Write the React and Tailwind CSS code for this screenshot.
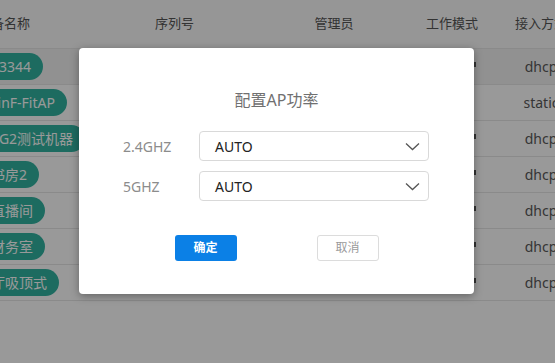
const rows = [
  { name: 'AP-3344', access: 'dhcp', mark: true, active: true },
  { name: 'MainF-FitAP', access: 'static', mark: false },
  { name: 'AP-G2测试机器', access: 'dhcp', mark: true },
  { name: '大书房2', access: 'dhcp', mark: true },
  { name: '大直播间', access: 'dhcp', mark: true },
  { name: '大财务室', access: 'dhcp', mark: true },
  { name: '大厅吸顶式', access: 'dhcp', mark: true },
];

const bands = [
  { id: '2.4', label: '2.4GHZ' },
  { id: '5', label: '5GHZ' },
];

function Chevron() {
  return (
    <svg width="15" height="9" viewBox="0 0 15 9" fill="none">
      <polyline points="1,1.5 7.5,7.5 14,1.5" stroke="#555" strokeWidth="1.3" />
    </svg>
  );
}

function DeviceTable() {
  return (
    <div className="ml-[-60px] w-[642px] text-[13px] text-[#595959]">
      {/* header */}
      <div className="flex h-[49px] items-center border-b border-[#e6e6e6] bg-[#fafafa] text-[#555]">
        <div className="w-[145px] shrink-0 pl-[38px]">设备名称</div>
        <div className="w-[179px] shrink-0 text-center">序列号</div>
        <div className="w-[140px] shrink-0 text-center">管理员</div>
        <div className="w-[96px] shrink-0 whitespace-nowrap text-center">工作模式</div>
        <div className="w-[82px] shrink-0 whitespace-nowrap text-center">接入方式</div>
      </div>

      {rows.map((r) => (
        <div
          key={r.name}
          className={`flex h-[36px] items-center border-b border-[#e6e6e6] ${r.active ? 'bg-[#f2f2f2]' : 'bg-white'}`}
        >
          <div className="w-[145px] shrink-0 pl-[25px]">
            <span className="inline-flex h-[27px] items-center whitespace-nowrap rounded-full bg-[#31b3a1] px-3 text-[14px] text-white">
              {r.name}
            </span>
          </div>
          <div className="w-[179px] shrink-0" />
          <div className="w-[140px] shrink-0" />
          <div className="flex w-[96px] shrink-0 justify-end pr-[24px]">
            {r.mark && <span className="mb-[4px] h-[5px] w-[2px] bg-[#555]" />}
          </div>
          <div className="w-[82px] shrink-0 text-center text-[14px]">{r.access}</div>
        </div>
      ))}
    </div>
  );
}

function PowerDialog() {
  return (
    <div className="absolute left-[79px] top-[48px] flex h-[246px] w-[395px] flex-col items-center rounded-[4px] bg-white pt-[40px] shadow-[0_2px_8px_rgba(0,0,0,0.35)]">
      <h2 className="text-[16px] leading-[24px] text-[#707070]">配置AP功率</h2>

      <div className="mt-[19px] flex w-full flex-col gap-[10px] pl-[44px] pr-[45px]">
        {bands.map((b) => (
          <div key={b.id} className="flex items-center">
            <span className="w-[76px] shrink-0 text-[14px] text-[#8c8c8c]">{b.label}</span>
            <div className="flex h-[30px] flex-1 items-center justify-between rounded-[4px] border border-[#d9d9d9] pl-[15px] pr-[8px] text-[14px] text-[#222]">
              <span>AUTO</span>
              <Chevron />
            </div>
          </div>
        ))}
      </div>

      <div className="mt-[34px] flex gap-[80px] text-[12px]">
        <button className="h-[26px] w-[62px] rounded-[3px] bg-[#0b80e6] font-bold text-white">确定</button>
        <button className="h-[26px] w-[62px] rounded-[3px] border border-[#dcdcdc] bg-white text-[#9a9a9a]">取消</button>
      </div>
    </div>
  );
}

export default function App() {
  return (
    <div
      className="relative h-[363px] w-[555px] overflow-hidden bg-white"
      style={{ fontFamily: '"Noto Sans", "Noto Sans CJK SC", sans-serif' }}
    >
      <DeviceTable />
      <div className="absolute inset-0 bg-black/40" />
      <PowerDialog />
    </div>
  );
}
